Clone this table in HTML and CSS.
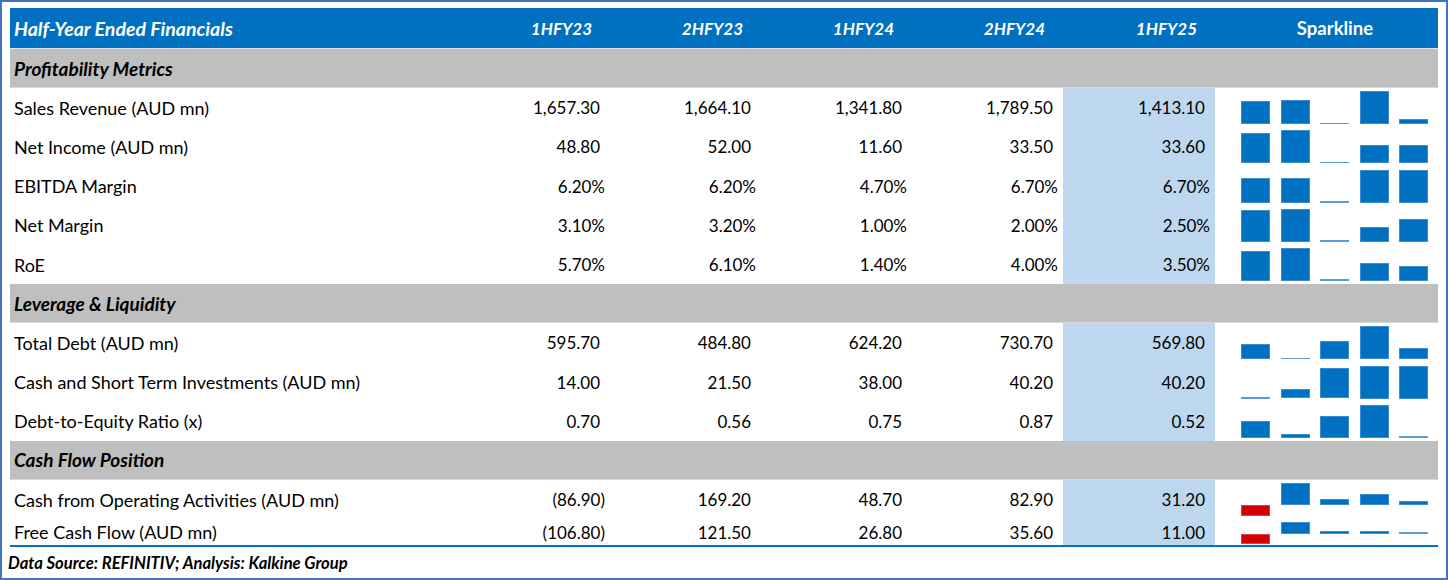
FILE: index.html
```html
<!DOCTYPE html>
<html lang="en">
<head>
<meta charset="utf-8">
<title>Half-Year Ended Financials</title>
<link rel="stylesheet" href="styles.css">
</head>
<body>
<div class="frame">
  <div class="tbl">
    <div class="row hdr">
      <div class="cell lbl">Half-Year Ended Financials</div>
      <div class="cell hcol">1HFY23</div>
      <div class="cell hcol">2HFY23</div>
      <div class="cell hcol">1HFY24</div>
      <div class="cell hcol">2HFY24</div>
      <div class="cell hcol">1HFY25</div>
      <div class="cell hspark">Sparkline</div>
    </div>

    <div class="row sec"><div class="cell lbl">Profitability Metrics</div></div>

    <div class="row data">
      <div class="cell lbl">Sales Revenue (AUD mn)</div>
      <div class="cell num">1,657.30</div>
      <div class="cell num">1,664.10</div>
      <div class="cell num">1,341.80</div>
      <div class="cell num">1,789.50</div>
      <div class="cell num hl">1,413.10</div>
      <div class="cell spark"><div class="bars" data-v="1657.3,1664.1,1341.8,1789.5,1413.1"></div></div>
    </div>
    <div class="row data">
      <div class="cell lbl">Net Income (AUD mn)</div>
      <div class="cell num">48.80</div>
      <div class="cell num">52.00</div>
      <div class="cell num">11.60</div>
      <div class="cell num">33.50</div>
      <div class="cell num hl">33.60</div>
      <div class="cell spark"><div class="bars" data-v="48.8,52,11.6,33.5,33.6"></div></div>
    </div>
    <div class="row data">
      <div class="cell lbl">EBITDA Margin</div>
      <div class="cell num pct">6.20%</div>
      <div class="cell num pct">6.20%</div>
      <div class="cell num pct">4.70%</div>
      <div class="cell num pct">6.70%</div>
      <div class="cell num pct hl">6.70%</div>
      <div class="cell spark"><div class="bars" data-v="6.2,6.2,4.7,6.7,6.7"></div></div>
    </div>
    <div class="row data">
      <div class="cell lbl">Net Margin</div>
      <div class="cell num pct">3.10%</div>
      <div class="cell num pct">3.20%</div>
      <div class="cell num pct">1.00%</div>
      <div class="cell num pct">2.00%</div>
      <div class="cell num pct hl">2.50%</div>
      <div class="cell spark"><div class="bars" data-v="3.1,3.2,1.0,2.0,2.5"></div></div>
    </div>
    <div class="row data">
      <div class="cell lbl">RoE</div>
      <div class="cell num pct">5.70%</div>
      <div class="cell num pct">6.10%</div>
      <div class="cell num pct">1.40%</div>
      <div class="cell num pct">4.00%</div>
      <div class="cell num pct hl">3.50%</div>
      <div class="cell spark"><div class="bars" data-v="5.7,6.1,1.4,4.0,3.5"></div></div>
    </div>

    <div class="row sec"><div class="cell lbl">Leverage &amp; Liquidity</div></div>

    <div class="row data">
      <div class="cell lbl">Total Debt (AUD mn)</div>
      <div class="cell num">595.70</div>
      <div class="cell num">484.80</div>
      <div class="cell num">624.20</div>
      <div class="cell num">730.70</div>
      <div class="cell num hl">569.80</div>
      <div class="cell spark"><div class="bars" data-v="595.7,484.8,624.2,730.7,569.8"></div></div>
    </div>
    <div class="row data">
      <div class="cell lbl">Cash and Short Term Investments (AUD mn)</div>
      <div class="cell num">14.00</div>
      <div class="cell num">21.50</div>
      <div class="cell num">38.00</div>
      <div class="cell num">40.20</div>
      <div class="cell num hl">40.20</div>
      <div class="cell spark"><div class="bars" data-v="14,21.5,38,40.2,40.2"></div></div>
    </div>
    <div class="row data">
      <div class="cell lbl">Debt-to-Equity Ratio (x)</div>
      <div class="cell num">0.70</div>
      <div class="cell num">0.56</div>
      <div class="cell num">0.75</div>
      <div class="cell num">0.87</div>
      <div class="cell num hl">0.52</div>
      <div class="cell spark"><div class="bars" data-v="0.70,0.56,0.75,0.87,0.52"></div></div>
    </div>

    <div class="row sec"><div class="cell lbl">Cash Flow Position</div></div>

    <div class="row data">
      <div class="cell lbl">Cash from Operating Activities (AUD mn)</div>
      <div class="cell num neg">(86.90)</div>
      <div class="cell num">169.20</div>
      <div class="cell num">48.70</div>
      <div class="cell num">82.90</div>
      <div class="cell num hl">31.20</div>
      <div class="cell spark"><div class="bars" data-v="-86.9,169.2,48.7,82.9,31.2"></div></div>
    </div>
    <div class="row data last">
      <div class="cell lbl">Free Cash Flow (AUD mn)</div>
      <div class="cell num neg">(106.80)</div>
      <div class="cell num">121.50</div>
      <div class="cell num">26.80</div>
      <div class="cell num">35.60</div>
      <div class="cell num hl">11.00</div>
      <div class="cell spark"><div class="bars" data-v="-106.8,121.5,26.8,35.6,11.0"></div></div>
    </div>
  </div>
  <div class="footer">Data Source: REFINITIV; Analysis: Kalkine Group</div>
</div>
<script src="script.js"></script>
</body>
</html>
```

FILE: styles.css
```css
* { box-sizing: border-box; margin: 0; padding: 0; }
body { margin: 0; background: #fff; font-family: Lato, "Liberation Sans", sans-serif; color: #000; }
.frame { width: 1448px; height: 580px; border: 2px solid #4472C4; padding: 6px 8px 0 8px; background: #fff; }
.tbl { width: 1428px; border-bottom: 2px solid #0070C0; }
.row { display: grid; grid-template-columns: 449px 151px 151px 151px 151px 152px 223px; height: 39.2px; font-size: 17px; }
.cell { display: flex; align-items: center; white-space: nowrap; }
.lbl { padding-left: 4px; }
.data .lbl { font-size: 18px; }
.hdr { height: 41px; background: #0070C0; color: #fff; font-weight: 700; font-style: italic; border-bottom: 1px solid #d9e6f2; }
.hdr .lbl { font-size: 19.5px; }
.hcol { justify-content: flex-end; padding-right: 18px; }
.hspark { justify-content: center; padding-left: 17px; font-style: normal; font-size: 18.5px; }
.sec { background: #BFBFBF; font-weight: 700; font-style: italic; border-bottom: 1px solid #d9d9d9; }
.sec .lbl { grid-column: 1 / -1; font-size: 19px; }
.num { justify-content: flex-end; padding-right: 10px; }
.num.pct, .num.neg { padding-right: 5px; }
.hl { background: #BDD7EE; }
.data.last { height: 26px; }
.spark { align-items: flex-start; padding-top: 3px; padding-left: 26px; }
.bars { display: flex; align-items: flex-start; gap: 10.5px; height: 33px; }
.data.last .bars { height: 22px; }
.bar { display: block; width: 29px; background: #0070C0; box-shadow: inset 0 0 0 1px #3d8bd0; }
.bar-neg { background: #D00000; box-shadow: inset 0 0 0 1px #e04040; }
.bar-min { background: #5B9BD5; box-shadow: none; }
.footer { height: 31px; display: flex; align-items: center; margin-left: -2px; font-size: 16.6px; font-weight: 700; font-style: italic; }
```

FILE: script.js
```js
document.querySelectorAll('.bars').forEach(function (el) {
  var v = el.getAttribute('data-v').split(',').map(Number);
  var H = el.clientHeight;
  var mn = Math.min.apply(null, v);
  var mx = Math.max.apply(null, v);
  v.forEach(function (x) {
    var b = document.createElement('span');
    b.className = 'bar';
    var top, h;
    if (mn < 0 && mx > 0) {
      var r = mx - mn;
      var zero = mx / r * H;
      h = Math.abs(x) / r * H;
      if (x < 0) {
        top = zero;
        b.className += ' bar-neg';
      } else {
        top = zero - h;
      }
      if (h < 1.5) { b.className += ' bar-min'; h = 1.5; top = x < 0 ? zero : zero - h; }
    } else {
      h = mx === mn ? H : (x - mn) / (mx - mn) * H;
      if (h < 1.5) { b.className += ' bar-min'; h = 1.5; }
      top = H - h;
    }
    b.style.height = h + 'px';
    b.style.marginTop = top + 'px';
    el.appendChild(b);
  });
});
```
